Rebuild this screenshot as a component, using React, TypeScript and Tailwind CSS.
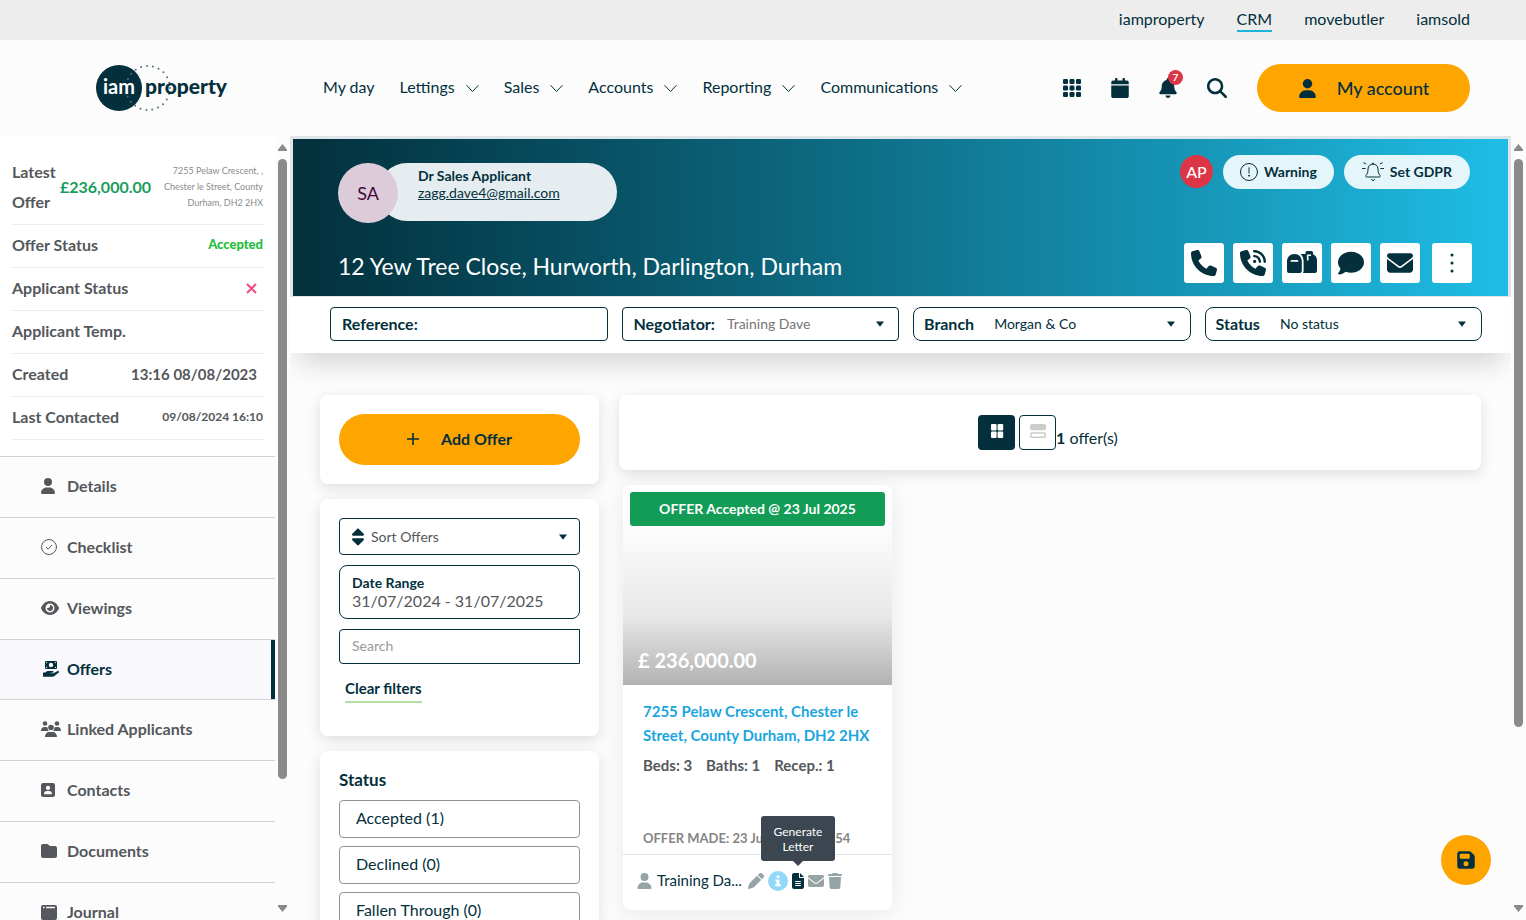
import React from 'react'
import {
  FaUser,
  FaEye,
  FaFolder,
  FaCalendar,
  FaBell,
  FaMagnifyingGlass,
  FaPhone,
  FaPhoneVolume,
  FaComment,
  FaEnvelope,
  FaPen,
  FaFileLines,
  FaTrash,
  FaFloppyDisk,
  FaSort,
} from 'react-icons/fa6'

const topLinks = ['iamproperty', 'CRM', 'movebutler', 'iamsold']
const navLinks = ['My day', 'Lettings', 'Sales', 'Accounts', 'Reporting', 'Communications']
const statuses = ['Accepted (1)', 'Declined (0)', 'Fallen Through (0)']

interface IconProps {
  className?: string
}

const Logo = () => (
  <svg className="w-[132px] h-[48px]" viewBox="0 0 132 48" role="img" aria-label="iam property">
    <circle cx="23" cy="24" r="23" fill="#03303c" />
    <circle cx="52" cy="24" r="22" fill="none" stroke="#56707a" strokeWidth="2" strokeLinecap="round" strokeDasharray="0 6" />
    <text x="7" y="30" fontSize="20" fontWeight="700" fill="#fff" fontFamily="Lato, sans-serif">
      iam
    </text>
    <text x="49" y="30" fontSize="21" fontWeight="900" fill="#03303c" fontFamily="Lato, sans-serif">
      property
    </text>
  </svg>
)

const Chevron = () => (
  <svg className="w-[13px] h-[13px]" viewBox="0 0 13 13" fill="none" stroke="#03303c" strokeLinecap="round">
    <path d="M.8 4.5l5.7 6 5.7-6" />
  </svg>
)

const Caret = ({ className = '' }: IconProps) => (
  <svg className={`w-2 h-2 pointer-events-none ${className}`} viewBox="0 0 8 8">
    <path d="M0 1.5h8L4 6.8z" fill="#03303c" />
  </svg>
)

const GridIcon = () => (
  <svg className="w-[18px] h-[18px]" viewBox="0 0 18 18" fill="#03303c">
    {[0, 6.5, 13].map((y) => [0, 6.5, 13].map((x) => <rect key={`${x}-${y}`} x={x} y={y} width="5" height="5" rx="1.2" />))}
  </svg>
)

const CheckIcon = ({ className }: IconProps) => (
  <svg className={className} viewBox="0 0 16 16" fill="none" stroke="currentColor" strokeLinecap="round" strokeLinejoin="round">
    <circle cx="8" cy="8" r="7.5" />
    <path d="M5.2 8.2l2 2 3.6-3.9" />
  </svg>
)

const HandMoneyIcon = ({ className }: IconProps) => (
  <svg className={className} viewBox="0 0 16 16" fill="currentColor">
    <path
      fillRule="evenodd"
      d="M3 0h10a1 1 0 0 1 1 1v6a1 1 0 0 1-1 1H3a1 1 0 0 1-1-1V1a1 1 0 0 1 1-1zM8 1.8a2.2 2.2 0 1 0 0 4.4 2.2 2.2 0 0 0 0-4.4zM3 1v1.5L4.5 1zm10 0v1.5L11.5 1zM3 7V5.5L4.5 7zm10 0V5.5L11.5 7z"
    />
    <path d="M.5 11.5h1.8l1.3-1c.6-.4 1-.5 1.700-.5h4.200c1.300 0 1.300 1.800 0 1.800H7.400v.5h3.100l3.700-2.100c1.300-.7 2.400.8 1.300 1.600l-4.200 3.200c-.6.5-1.100.7-1.900.7H.5a.5.5 0 0 1-.5-.5v-3.200c0-.3.2-.5.5-.5z" />
  </svg>
)

const GroupIcon = ({ className }: IconProps) => (
  <svg className={className} viewBox="0 0 20 16" fill="currentColor">
    <circle cx="4" cy="2.5" r="2.3" />
    <circle cx="16" cy="2.5" r="2.3" />
    <circle cx="10" cy="6.5" r="2.8" />
    <path d="M0 10c0-2.500 1.300-4 3.300-4h1.500c.8 0 1.500.2 1.900.6-.2 1.400.3 2.600 1.200 3.400zM20 10c0-2.500-1.300-4-3.300-4h-1.500c-.8 0-1.500.2-1.900.6.2 1.400-.3 2.600-1.200 3.400zM4 16c0-3 1.800-5 4-5h4c2.200 0 4 2 4 5z" />
  </svg>
)

const ContactIcon = ({ className }: IconProps) => (
  <svg className={className} viewBox="0 0 14 14" fill="currentColor">
    <path
      fillRule="evenodd"
      d="M2 0h10a2 2 0 0 1 2 2v10a2 2 0 0 1-2 2H2a2 2 0 0 1-2-2V2a2 2 0 0 1 2-2zm5 2.800a2.100 2.100 0 1 0 0 4.200 2.100 2.100 0 0 0 0-4.200zM3 11.200h8c0-2-1.200-3.200-2.800-3.200H5.800C4.200 8 3 9.200 3 11.200z"
    />
  </svg>
)

const JournalIcon = ({ className }: IconProps) => (
  <svg className={className} viewBox="0 0 16 15" fill="currentColor">
    <path fillRule="evenodd" d="M2 0h12a2 2 0 0 1 2 2v11a2 2 0 0 1-2 2H2a2 2 0 0 1-2-2V2a2 2 0 0 1 2-2zm0 1.800v1.500h1.500V1.800zm3 0v1.500h9V1.800z" />
  </svg>
)

const MailboxIcon = () => (
  <svg className="w-[30px] h-[24px]" viewBox="0 0 30 24" fill="#03303c">
    <path
      fillRule="evenodd"
      d="M7.500 3C12 3 14.800 6 14.800 10.500v9.500a2 2 0 0 1-2 2H2a2 2 0 0 1-2-2v-9.500C0 6 3 3 7.500 3zM4.500 9a.8.8 0 0 0 0 1.800h6a.8.8 0 0 0 0-1.800z"
    />
    <path d="M13.500 3h5V1.500A1.500 1.500 0 0 1 20 0h4.500A1.500 1.500 0 0 1 26 1.500V3.300c2.500 1 4 3.200 4 6V20a2 2 0 0 1-2 2H16c.4-.6.6-1.300.6-2V10.500c0-3.200-1-5.800-3.100-7.500z" />
    <path d="M20.700 9.500V4.200H24" fill="none" stroke="#fff" strokeWidth="1.6" />
  </svg>
)

const DotsIcon = () => (
  <svg className="w-[4px] h-[20px]" viewBox="0 0 4 20" fill="#03303c">
    <circle cx="2" cy="2" r="1.5" />
    <circle cx="2" cy="10" r="1.5" />
    <circle cx="2" cy="18" r="1.5" />
  </svg>
)

const WarningIcon = () => (
  <svg className="w-[18px] h-[18px]" viewBox="0 0 18 18" fill="none" stroke="#03303c" strokeLinecap="round">
    <circle cx="9" cy="9" r="8.5" />
    <path d="M9 4.800v5.200" />
    <circle cx="9" cy="12.7" r=".5" fill="#03303c" />
  </svg>
)

const AlarmIcon = () => (
  <svg className="w-[22px] h-[20px]" viewBox="0 0 22 20" fill="none" stroke="#03303c" strokeLinecap="round" strokeLinejoin="round">
    <path d="M11 1v1M11 2c-3 0-5 2-5 5 0 3.500-.7 4.800-2 6.300-.6.900-.2 1.700.8 1.700h12.400c1 0 1.400-.8.8-1.700-1.300-1.500-2-2.800-2-6.300 0-3-2-5-5-5zM9.300 17.500c.8 1.400 2.600 1.400 3.400 0M.5 6.500h2.700M18.800 6.500h2.700M1.800.8l2 1M20.200.8l-2 1" />
  </svg>
)

const InfoIcon = () => (
  <svg className="w-5 h-5" viewBox="0 0 20 20">
    <circle cx="10" cy="10" r="10" fill="#92d8f8" />
    <path d="M8.500 4.500h3v2.500h-3zM7.500 8.500h4v5h1.500v1.700H7v-1.700h1.500v-3.300h-1z" fill="#fff" />
  </svg>
)

const menu = [
  { name: 'Details', icon: <FaUser className="w-[14px] h-4" /> },
  { name: 'Checklist', icon: <CheckIcon className="w-4 h-4" /> },
  { name: 'Viewings', icon: <FaEye className="w-[18px] h-4" /> },
  { name: 'Offers', icon: <HandMoneyIcon className="w-4 h-4 ml-[2px]" />, active: true },
  { name: 'Linked Applicants', icon: <GroupIcon className="w-5 h-4" /> },
  { name: 'Contacts', icon: <ContactIcon className="w-[14px] h-[14px]" /> },
  { name: 'Documents', icon: <FaFolder className="w-4 h-4" /> },
  { name: 'Journal', icon: <JournalIcon className="w-4 h-[15px]" /> },
]

const actions = [
  { name: 'Call', icon: <FaPhone size={26} /> },
  { name: 'Log call', icon: <FaPhoneVolume size={26} /> },
  { name: 'Post', icon: <MailboxIcon /> },
  { name: 'Message', icon: <FaComment size={26} /> },
  { name: 'Email', icon: <FaEnvelope size={26} /> },
]

// Scroll track with arrows at both ends
const ScrollBar = ({ thumb }: { thumb: string }) => (
  <div aria-hidden="true" className="flex flex-col items-center w-[15px] shrink-0 pt-2 pb-2 bg-[#fcfcfc]">
    <svg className="w-[9px] h-[7px] shrink-0" viewBox="0 0 9 7" fill="#8a8a8a">
      <path d="M4.500 0L9 5.500V7H0V5.500z" />
    </svg>
    <div className="flex-1 w-full flex justify-center pt-2 pb-2">
      <div className={`w-[9px] rounded-full bg-[#8a8a8a] ${thumb}`} />
    </div>
    <svg className="w-[9px] h-[7px] shrink-0" viewBox="0 0 9 7" fill="#8a8a8a">
      <path d="M4.500 7L9 1.500V0H0v1.500z" />
    </svg>
  </div>
)

const Header = () => (
  <header className="shrink-0">
    <nav className="h-10 bg-[#ededed] flex justify-end gap-8 pr-14 pt-[7px]">
      {topLinks.map((link) => (
        <a key={link} href="#" className={`h-[25px] leading-6 ${link === 'CRM' ? 'border-b-2 border-[#1db4dc]' : ''}`}>
          {link}
        </a>
      ))}
    </nav>
    <div className="h-24 bg-[#fcfcfc] flex items-center pl-24 pr-14">
      <a href="#">
        <Logo />
      </a>
      <nav className="flex gap-[25px] ml-[95px] pb-[2px]">
        {navLinks.map((link) => (
          <a key={link} href="#" className="flex items-center gap-[11px]">
            {link}
            {link !== 'My day' && <Chevron />}
          </a>
        ))}
      </nav>
      <div className="flex items-center gap-[30px] ml-auto">
        <button aria-label="Apps">
          <GridIcon />
        </button>
        <button aria-label="Calendar">
          <FaCalendar size={20} className="w-[18px]" />
        </button>
        <button aria-label="Notifications" className="relative">
          <FaBell size={20} className="w-[18px]" />
          <span className="absolute -top-2 left-[9px] w-[15px] h-[15px] rounded-full bg-[#dc3545] text-white text-[10px] leading-[15px] font-bold">
            7
          </span>
        </button>
        <button aria-label="Search">
          <FaMagnifyingGlass size={20} />
        </button>
        <button className="flex items-center justify-center gap-5 w-[213px] h-12 rounded-full bg-[#ffa500] text-lg font-medium">
          <FaUser size={19} />
          My account
        </button>
      </div>
    </div>
  </header>
)

const detailRow = 'flex items-center justify-between h-[43px] pb-[2px] border-b border-[#ececec]'

const Sidebar = () => (
  <aside className="w-[275px] shrink-0 overflow-hidden bg-[#fcfcfc] text-[#54575b] font-bold">
    <dl className="bg-white px-3 pt-[18px] pb-4 border-b border-[#d0d2d4]">
      <div className="flex items-center h-[71px] pb-1 border-b border-[#ececec]">
        <dt className="w-12 leading-[30px]">Latest Offer</dt>
        <dd className="text-[#189c5c]">£236,000.00</dd>
        <dd className="flex-1 text-right text-[9px] leading-4 font-normal text-[#8b8b8b]">
          7255 Pelaw Crescent, ,<br />
          Chester le Street, County
          <br />
          Durham, DH2 2HX
        </dd>
      </div>
      <div className={detailRow}>
        <dt>Offer Status</dt>
        <dd className="text-[13px] font-black text-[#22c03c]">Accepted</dd>
      </div>
      <div className={detailRow}>
        <dt>Applicant Status</dt>
        <dd className="pr-[6px]">
          <svg className="w-[11px] h-[11px]" viewBox="0 0 11 11" stroke="#ee4c80" strokeWidth="2" role="img" aria-label="No">
            <path d="M1 1l9 9M10 1l-9 9" />
          </svg>
        </dd>
      </div>
      <div className={detailRow}>
        <dt>Applicant Temp.</dt>
      </div>
      <div className={detailRow}>
        <dt>Created</dt>
        <dd className="pr-[6px] text-[15px]">13:16 08/08/2023</dd>
      </div>
      <div className={detailRow}>
        <dt>Last Contacted</dt>
        <dd className="text-xs">09/08/2024 16:10</dd>
      </div>
    </dl>
    <nav>
      {menu.map(({ name, icon, active }) => (
        <a
          key={name}
          href="#"
          className={`flex items-center pl-[41px] pb-[2px] border-b border-[#d0d2d4] ${
            active ? 'h-[60px] bg-[#f8f8fd] text-[#03303c] shadow-[inset_-4px_0_0_#03303c]' : 'h-[61px]'
          }`}
        >
          <span className="w-[26px]">{icon}</span>
          {name}
        </a>
      ))}
    </nav>
  </aside>
)

const Banner = () => (
  <section className="border-[3px] border-b border-[#dfe6ea] bg-linear-to-r from-[#03303c] to-[#1fbde6] h-[161px] pl-[45px] pr-9 flex flex-col justify-between pt-4 pb-[13px]">
    <div className="flex justify-between">
      <div className="flex pt-2">
        <span className="w-[60px] h-[60px] rounded-full bg-[#dcccda] text-[#40063c] text-lg flex items-center justify-center z-10">
          SA
        </span>
        <div className="-ml-5 pl-10 pt-1 w-[239px] h-[58px] rounded-full bg-[#e6edf0] text-sm">
          <p className="leading-[18px] font-bold">Dr Sales Applicant</p>
          <a href="#" className="block leading-4 underline">
            zagg.dave4@gmail.com
          </a>
        </div>
      </div>
      <div className="flex gap-[10px] h-[34px] mr-[2px]">
        <span className="w-[33px] h-[33px] rounded-full bg-[#dc3545] text-white font-medium flex items-center justify-center">
          AP
        </span>
        <button className="flex items-center gap-[6px] px-[17px] rounded-full bg-[#e5f6fb] text-sm font-bold">
          <WarningIcon />
          Warning
        </button>
        <button className="flex items-center gap-[6px] px-[18px] rounded-full bg-[#e5f6fb] text-sm font-bold">
          <AlarmIcon />
          Set GDPR
        </button>
      </div>
    </div>
    <div className="flex justify-between items-center">
      <h1 className="text-[23px] leading-8 text-white pt-[6px]">12 Yew Tree Close, Hurworth, Darlington, Durham</h1>
      <div className="flex gap-[9px]">
        {actions.map(({ name, icon }) => (
          <button key={name} aria-label={name} className="w-10 h-10 rounded-[3px] bg-white flex items-center justify-center">
            {icon}
          </button>
        ))}
        <button aria-label="More" className="w-10 h-10 ml-[3px] rounded-[3px] bg-white flex items-center justify-center">
          <DotsIcon />
        </button>
      </div>
    </div>
  </section>
)

interface FieldProps {
  label: string
  value: string
  className?: string
}

const SelectField = ({ label, value, className = '' }: FieldProps) => (
  <label className={`flex items-center border border-[#03303c] font-bold ${className}`}>
    {label}
    <select className="flex-1 min-w-0 appearance-none bg-transparent text-sm font-normal outline-none">
      <option>{value}</option>
    </select>
    <Caret className="mr-[3px]" />
  </label>
)

const Filters = () => (
  <section className="bg-white grid grid-cols-4 h-14 gap-[14px] pl-10 pr-[29px] pt-[10px] pb-3 shadow-[0_18px_28px_-8px_rgba(0,0,0,0.16)]">
    <label className="flex items-center border border-[#03303c] rounded px-[11px] font-bold">
      Reference:
      <input className="flex-1 min-w-0 pl-2 outline-none font-normal" />
    </label>
    <SelectField label="Negotiator:" value="Training Dave" className="rounded px-[11px] gap-3 [&_select]:text-[#757575]" />
    <SelectField label="Branch" value="Morgan & Co" className="rounded-lg pl-[10px] pr-3 gap-5" />
    <SelectField label="Status" value="No status" className="rounded-lg pl-[10px] pr-3 gap-5" />
  </section>
)

const card = 'bg-white rounded-lg shadow-[0_4px_14px_rgba(0,0,0,0.12)]'

const FilterColumn = () => (
  <div className="w-[279px] shrink-0 flex flex-col gap-[15px]">
    <div className={`${card} h-[89px] px-[19px] pt-[19px]`}>
      <button className="w-full h-[51px] pb-[2px] rounded-full bg-[#ffa500] font-bold flex items-center justify-center gap-[22px]">
        <svg className="w-3 h-3" viewBox="0 0 12 12" stroke="#03303c" strokeWidth="1.6">
          <path d="M6 0v12M0 6h12" />
        </svg>
        Add Offer
      </button>
    </div>
    <div className={`${card} h-[237px] px-[19px] pt-[19px]`}>
      <div className="flex items-center h-[37px] rounded border border-[#03303c] px-3">
        <FaSort size={20} className="w-3" />
        <select aria-label="Sort Offers" className="flex-1 appearance-none pl-[7px] text-sm text-[#54575b] outline-none">
          <option>Sort Offers</option>
        </select>
        <Caret />
      </div>
      <label className="block mt-[10px] h-[54px] rounded-lg border border-[#03303c] px-3 pt-2 text-sm leading-[18px] font-bold">
        Date Range
        <input
          defaultValue="31/07/2024 - 31/07/2025"
          className="block w-full text-base leading-[18px] font-normal text-[#54575b] outline-none"
        />
      </label>
      <input
        aria-label="Search"
        placeholder="Search"
        className="block mt-[10px] w-full h-[35px] pb-[2px] rounded-l border border-[#03303c] px-3 text-sm placeholder-[#9a9a9a] outline-none"
      />
      <button className="mt-[11px] ml-[6px] h-7 border-b-2 border-[#b5e0a5] text-[15px] font-bold">Clear filters</button>
    </div>
    <div className={`${card} h-[237px] px-[19px] pt-[17px]`}>
      <h2 className="text-[17px] leading-6 font-bold">Status</h2>
      <ul className="flex flex-col gap-2 mt-2">
        {statuses.map((status) => (
          <li key={status}>
            <button className="w-full h-[38px] pb-[2px] rounded border border-[#8d9498] px-4 text-left">{status}</button>
          </li>
        ))}
      </ul>
    </div>
  </div>
)

const OfferCard = () => (
  <article className="w-[269px] ml-1 mt-[15px] h-[425px] rounded-lg bg-white shadow-[0_4px_24px_rgba(0,0,0,0.08)] flex flex-col">
    <div className="h-[200px] rounded-t-lg px-[7px] pt-[7px] pb-2 flex flex-col justify-between bg-linear-to-b from-white from-15% via-[#e9e9e9] via-65% to-[#b2b2b2]">
      <p className="h-[34px] leading-[34px] rounded-[3px] bg-[#129c55] text-white text-sm font-bold text-center">
        OFFER Accepted @ 23 Jul 2025
      </p>
      <p className="pl-2 pb-[3px] text-xl leading-7 text-white font-bold">£ 236,000.00</p>
    </div>
    <div className="h-[169px] px-5 pt-[14px] text-[#54575b] flex flex-col">
      <a href="#" className="text-[15px] leading-6 font-bold text-[#1aa5e0]">
        7255 Pelaw Crescent, Chester le
        <br />
        Street, County Durham, DH2 2HX
      </a>
      <p className="mt-[6px] flex gap-[14px] text-[15px] leading-6 font-bold">
        <span>Beds: 3</span>
        <span>Baths: 1</span>
        <span>Recep.: 1</span>
      </p>
      <p className="mt-auto mb-1 text-[13px] leading-6 font-bold text-[#858585]">OFFER MADE: 23 Jul 2025 @ 10:54</p>
    </div>
    <footer className="flex items-center h-[54px] pb-[2px] border-t border-[#dfe6ea] pl-[14px] text-[#95a5a6]">
      <FaUser size={16} className="w-[15px]" />
      <span className="w-[91px] ml-[5px] whitespace-nowrap text-[15px] text-[#03303c]">Training Da...</span>
      <span className="flex items-center gap-1">
        <button aria-label="Edit">
          <FaPen size={16} />
        </button>
        <button aria-label="Info">
          <InfoIcon />
        </button>
        <button aria-label="Generate Letter" className="relative text-[#03303c]">
          <FaFileLines size={16} className="w-3" />
          <span
            role="tooltip"
            className="absolute bottom-7 left-1/2 -translate-x-1/2 w-[74px] h-[45px] pt-2 rounded-[3px] bg-[#3b4650] text-white text-xs leading-[15px]"
          >
            Generate Letter
            <svg className="absolute top-full left-8 w-[10px] h-[5px]" viewBox="0 0 10 5">
              <path d="M0 0h10L5 5z" fill="#3b4650" />
            </svg>
          </span>
        </button>
        <button aria-label="Email">
          <FaEnvelope size={16} />
        </button>
        <button aria-label="Delete">
          <FaTrash size={16} className="w-[14px]" />
        </button>
      </span>
    </footer>
  </article>
)

const Results = () => (
  <div className="flex-1">
    <div className={`${card} h-[75px] flex justify-center pt-5 pr-1`}>
      <button aria-label="Grid view" className="w-[37px] h-[35px] rounded bg-[#03303c] flex justify-center pt-[9px]">
        <svg className="w-[14px] h-[14px]" viewBox="0 0 14 14" fill="#fff">
          <rect x="1" width="5.6" height="6.400" rx="1" />
          <rect x="7.600" width="5.6" height="6.400" rx="1" />
          <rect x="1" y="7.600" width="5.6" height="6.400" rx="1" />
          <rect x="7.600" y="7.600" width="5.6" height="6.400" rx="1" />
        </svg>
      </button>
      <button aria-label="List view" className="w-[37px] h-[35px] ml-1 rounded border border-[#03303c] flex justify-center pt-2">
        <svg className="w-4 h-[14px]" viewBox="0 0 16 14" fill="none" stroke="#ccc" strokeWidth="1.5">
          <rect x=".8" y=".8" width="14.4" height="4.6" rx=".8" fill="#ccc" />
          <rect x=".8" y="9" width="14.4" height="4.2" rx=".8" />
        </svg>
      </button>
      <p className="pt-[11px]">
        <strong className="font-bold">1</strong> offer(s)
      </p>
    </div>
    <OfferCard />
  </div>
)

export default function App() {
  return (
    <div className="h-screen flex flex-col overflow-hidden bg-[#fcfcfc] text-[#03303c] text-base font-[Lato,'Open_Sans',sans-serif]">
      <Header />
      <div className="flex flex-1 min-h-0">
        <Sidebar />
        <ScrollBar thumb="h-[84%]" />
        <main className="flex-1 min-w-0 overflow-hidden">
          <Banner />
          <Filters />
          <div className="flex items-start gap-5 px-[30px] pt-[42px]">
            <FilterColumn />
            <Results />
          </div>
        </main>
        <ScrollBar thumb="h-[77%]" />
      </div>
      <button
        aria-label="Save"
        className="fixed right-[35px] bottom-[35px] w-[50px] h-[50px] rounded-full bg-[#ffa500] flex items-center justify-center"
      >
        <FaFloppyDisk size={20} className="w-[18px]" />
      </button>
    </div>
  )
}
